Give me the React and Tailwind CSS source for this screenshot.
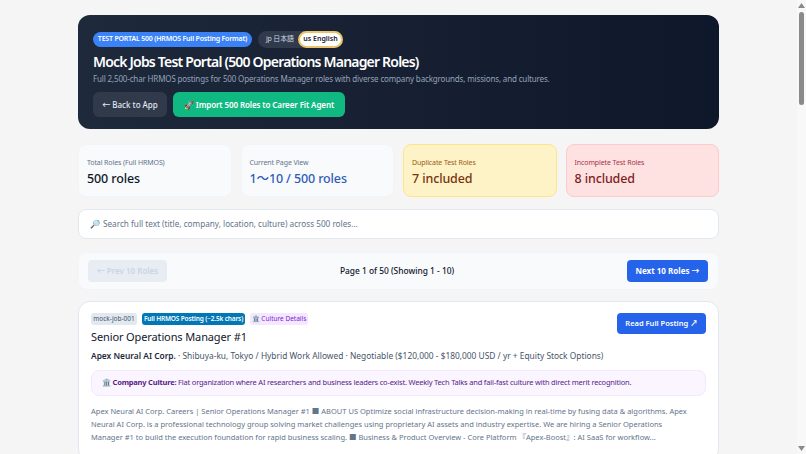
import React from "react";

const StatCard = ({ label, value, cardClass, labelClass, valueClass }) => (
  <div className={`h-[53px] rounded-lg border px-[8px] pt-[12px] ${cardClass}`}>
    <div className={`text-[7px] leading-[12px] tracking-[-0.1px] ${labelClass}`}>{label}</div>
    <div className={`text-[12.5px] leading-[20px] font-medium tracking-[-0.12px] ${valueClass}`}>{value}</div>
  </div>
);

const ScrollBar = () => (
  <div className="flex w-[9px] flex-col items-center bg-[#f8f8f8] py-[3px]">
    <svg width="7" height="5" viewBox="0 0 7 5"><path d="M3.5 0 L7 5 L0 5 Z" fill="#8a8a8a" /></svg>
    <div className="mt-[4px] h-[93px] w-[5px] rounded-full bg-[#8a8a8a]" />
    <svg className="mt-auto" width="7" height="5" viewBox="0 0 7 5"><path d="M0 0 L7 0 L3.5 5 Z" fill="#8a8a8a" /></svg>
  </div>
);

const App = () => {
  return (
    <div className="flex h-screen overflow-hidden bg-[#f5f5f5] font-['Noto_Sans','Noto_Sans_CJK_JP',sans-serif] text-[#0f172a]">
      <div className="min-w-0 flex-1 overflow-hidden">
        <div className="mx-auto w-[641px] pt-[15px]">
          <div className="h-[114px] rounded-xl bg-gradient-to-r from-[#1e293b] to-[#0f172a] px-[15px] pt-[16px]">
            <div className="flex items-center gap-[6px]">
              <span className="flex h-[15px] w-[159px] items-center justify-center rounded-full bg-[#3b82f6] text-[7px] font-semibold tracking-[-0.2px] text-white">
                TEST PORTAL 500 (HRMOS Full Posting Format)
              </span>
              <div className="flex h-[17px] w-[85px] items-center justify-between rounded-full bg-[#303a4b] pl-[8px] text-[7px] text-[#cbd5e1]">
                <span className="tracking-[-0.2px]">jp 日本語</span>
                <span className="flex h-[17px] w-[45px] items-center justify-center rounded-full border-2 border-[#e9c46a] bg-white font-semibold text-[#0f172a]">
                  us English
                </span>
              </div>
            </div>
            <h1 className="mt-[3px] text-[14px] leading-[21px] font-semibold tracking-[-0.8px] text-white">
              Mock Jobs Test Portal (500 Operations Manager Roles)
            </h1>
            <p className="mt-[1px] text-[8px] leading-[12px] tracking-[-0.15px] text-[#94a3b8]">
              Full 2,500-char HRMOS postings for 500 Operations Manager roles with diverse company backgrounds, missions, and cultures.
            </p>
            <div className="mt-[7px] flex gap-[6px]">
              <button className="h-[25px] w-[74px] rounded-md bg-[#303a4b] text-[8px] font-medium text-[#e2e8f0]">
                ← Back to App
              </button>
              <button className="h-[25px] w-[172px] rounded-md bg-[#10b981] text-[8px] font-semibold tracking-[-0.1px] text-white">
                🚀 Import 500 Roles to Career Fit Agent
              </button>
            </div>
          </div>

          <div className="mt-[15px] grid grid-cols-4 gap-[9px]">
            <StatCard label="Total Roles (Full HRMOS)" value="500 roles" cardClass="border-[#f1f5f9] bg-[#f8fafc]" labelClass="text-[#64748b]" valueClass="text-[#0f172a]" />
            <StatCard label="Current Page View" value="1〜10 / 500 roles" cardClass="border-[#f1f5f9] bg-[#f8fafc]" labelClass="text-[#64748b]" valueClass="text-[#2f5cb8]" />
            <StatCard label="Duplicate Test Roles" value="7 included" cardClass="border-[#fde68a] bg-[#fef3c7]" labelClass="text-[#9a5b13]" valueClass="text-[#78350f]" />
            <StatCard label="Incomplete Test Roles" value="8 included" cardClass="border-[#fecaca] bg-[#fee2e2]" labelClass="text-[#a83248]" valueClass="text-[#7f1d1d]" />
          </div>

          <div className="mt-[12px] flex h-[30px] items-center rounded-lg border border-[#e2e8f0] bg-white px-[11px] text-[8.2px] text-[#64748b]">
            🔎<span className="ml-[3px]">Search full text (title, company, location, culture) across 500 roles...</span>
          </div>

          <div className="mt-[13px] flex h-[38px] items-center justify-between rounded-lg border border-[#f1f5f9] bg-[#f8fafc] pr-[10px] pl-[9px]">
            <button className="h-[22px] w-[79px] rounded bg-[#e8edf3] text-[8px] font-semibold text-[#cbd5e1]">
              ← Prev 10 Roles
            </button>
            <span className="text-[8.4px] font-medium">Page 1 of 50 (Showing 1 - 10)</span>
            <button className="h-[22px] w-[81px] rounded bg-[#2563eb] text-[8px] font-bold text-white">
              Next 10 Roles →
            </button>
          </div>

          <div className="mt-[11px] h-[160px] rounded-xl border border-[#e2e8f0] bg-white px-[12px] pt-[11px]">
            <div className="flex items-start justify-between">
              <div>
                <div className="flex items-center gap-[5px]">
                  <span className="flex h-[12px] w-[46px] items-center justify-center rounded-[3px] bg-[#e2e8f0] text-[6.5px] text-[#475569]">mock-job-001</span>
                  <span className="flex h-[12px] w-[103px] items-center justify-center rounded-[3px] bg-[#0277b5] text-[6.5px] font-semibold tracking-[-0.15px] text-white">Full HRMOS Posting (~2.5k chars)</span>
                  <span className="flex h-[12px] w-[58px] items-center justify-center rounded-[3px] bg-[#f3e8ff] text-[6.5px] text-[#7e22ce]">🏛️ Culture Details</span>
                </div>
                <div className="mt-[3px] text-[11px] leading-[18px] tracking-[-0.12px]">Senior Operations Manager #1</div>
              </div>
              <button className="h-[21px] w-[89px] rounded bg-[#2563eb] text-[7.5px] font-semibold text-white">
                Read Full Posting ↗
              </button>
            </div>
            <div className="mt-[1px] text-[8.4px] leading-[18px] text-[#475569]">
              <span className="font-semibold text-[#1e293b]">Apex Neural AI Corp.</span> · Shibuya-ku, Tokyo / Hybrid Work Allowed · Negotiable ($120,000 - $180,000 USD / yr + Equity Stock Options)
            </div>
            <div className="mt-[5px] flex h-[26px] items-center rounded-lg border border-[#f3e8ff] bg-[#faf5ff] pr-[11px] pl-[10px] text-[7.5px] tracking-[-0.2px] text-[#581c87]">
              <span><span className="font-bold">🏛️ Company Culture:</span> Flat organization where AI researchers and business leaders co-exist. Weekly Tech Talks and fail-fast culture with direct merit recognition.</span>
            </div>
            <p className="mt-[9px] text-[7.5px] leading-[13px] text-[#64748b]">
              Apex Neural AI Corp. Careers | Senior Operations Manager #1 ■ ABOUT US Optimize social infrastructure decision-making in real-time by fusing data &amp; algorithms. Apex<br />
              Neural AI Corp. is a professional technology group solving market challenges using proprietary AI assets and industry expertise. We are hiring a Senior Operations<br />
              Manager #1 to build the execution foundation for rapid business scaling. ■ Business &amp; Product Overview - Core Platform 『Apex-Boost』: AI SaaS for workflow...
            </p>
          </div>
        </div>
      </div>
      <ScrollBar />
    </div>
  );
};

export default App;
